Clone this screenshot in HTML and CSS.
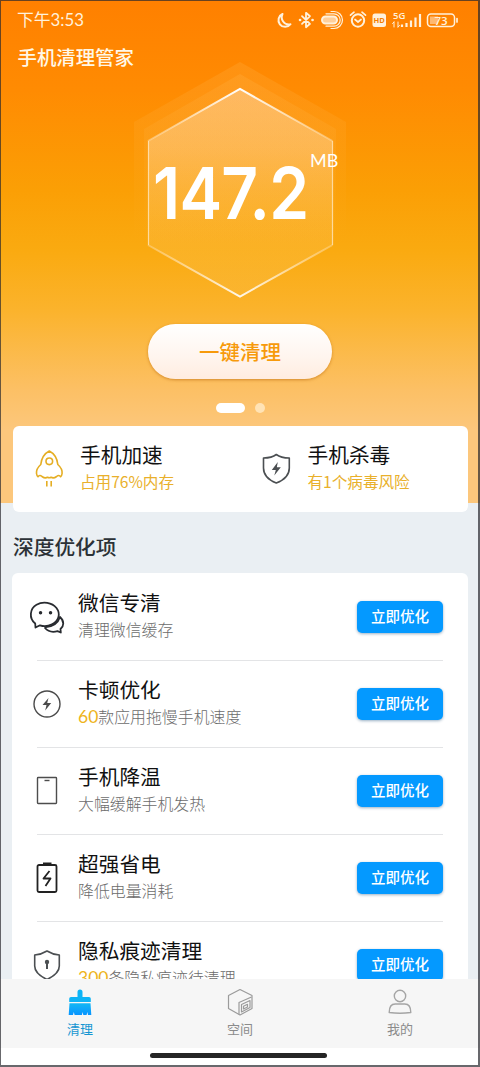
FILE: index.html
```html
<!DOCTYPE html>
<html lang="zh-CN">
<head>
<meta charset="utf-8">
<title>手机清理管家</title>
<link rel="stylesheet" href="styles.css">
</head>
<body>
<div class="phone">
  <main class="content">
    <section class="hero">
      <header class="status">
        <span class="time">下午3:53</span>
        <svg class="status-icons" width="184" height="22" viewBox="0 0 184 22" fill="none" stroke="#fff1dc" stroke-width="2" stroke-linecap="round" stroke-linejoin="round">
          <path d="M6.500 5a6.700 6.700 0 1 0 8 10.200C8 16.500 4 10 6.500 5z"/>
          <path d="M26 7.200l8 7.600-4 3.400V3.800l4 3.400-8 7.600" stroke-width="1.800"/>
          <path d="M24 11h.1M36.500 11h.1" stroke-width="2.600"/>
          <rect x="46" y="7.500" width="15" height="7" rx="3.500" fill="#ffcf9b"/>
          <path d="M50 4.800h8a6.200 6.200 0 0 1 0 12.400h-8M55 2.500h3a8.500 8.500 0 0 1 0 17h-3" stroke-width="1.200"/>
          <circle cx="82" cy="11.500" r="6.200"/><path d="M79 10.500l3 2.500 3-2.500M74.500 6.200l3.500-3M89.500 6.200l-3.500-3" stroke-width="1.700"/>
          <rect x="96.500" y="4.500" width="13.500" height="13.500" rx="2.500" fill="#fff1dc" stroke="none"/>
          <text x="103.200" y="14.200" class="hd">HD</text>
          <text x="117" y="9.500" class="net">5G</text>
          <path d="M118 13v5M122 13v5M116.500 14.500l1.500-1.500M122 18l1.500-1.500" stroke-width="1"/>
          <path d="M126 15.500v2.500M130.500 14v4M135 11.500v6.500M139.500 8.500v9.500M144 5v13" stroke-width="2.200" stroke-linecap="butt"/>
          <rect x="151.500" y="5" width="27" height="12.500" rx="3.500" stroke-width="1.500"/>
          <path d="M154 7.500h8v7.500h-8z" fill="#ffb970" stroke="none"/>
          <path d="M181 9.500v3.500" stroke-width="1.700"/>
          <text x="165" y="15.500" class="battery">73</text>
        </svg>
      </header>
      <h1 class="app-title">手机清理管家</h1>
      <div class="gauge">
        <svg class="hexagon" width="240" height="250" viewBox="0 0 240 250">
          <defs>
            <linearGradient id="halo" x1="0" y1="0" x2="0" y2="1">
              <stop offset="0" stop-color="#ffb850" stop-opacity=".22"/><stop offset=".75" stop-color="#ffb850" stop-opacity="0"/>
            </linearGradient>
            <linearGradient id="face" x1="0" y1="0" x2="0" y2="1">
              <stop offset="0" stop-color="#fff" stop-opacity=".3"/><stop offset=".28" stop-color="#ffe8c8" stop-opacity=".34"/><stop offset=".65" stop-color="#ffe0a0" stop-opacity=".18"/><stop offset="1" stop-color="#ffe0a0" stop-opacity=".08"/>
            </linearGradient>
            <linearGradient id="edge" x1="0" y1="0" x2="0" y2="1">
              <stop offset="0" stop-color="#fff"/><stop offset="1" stop-color="#ffe2b5" stop-opacity=".45"/>
            </linearGradient>
            <linearGradient id="edge-low" x1="0" y1="0" x2="0" y2="1">
              <stop offset="0" stop-color="#ffe2b5" stop-opacity=".4"/><stop offset="1" stop-color="#fff" stop-opacity=".9"/>
            </linearGradient>
          </defs>
          <path d="M120 12L226 72V202L120 250 14 202V72z" fill="url(#halo)"/>
          <path d="M120 24L216 79V197L120 250 24 197V79z" fill="url(#halo)"/>
          <path d="M120 39L212.500 91V195L120 246.500 28 195V91z" fill="url(#face)"/>
          <path d="M28.500 91V195M212.500 91V195" stroke="#ffe6bd" stroke-opacity=".8" stroke-width="1.200" fill="none"/>
          <path d="M28 91L120 39 212.500 91" stroke="url(#edge)" stroke-width="2" fill="none"/>
          <path d="M28 195L120 246.500 212.500 195" stroke="url(#edge-low)" stroke-width="2" fill="none"/>
        </svg>
        <div class="reading"><span class="amount">147.2</span><span class="unit">MB</span></div>
      </div>
      <div class="clean-btn">一键清理</div>
      <div class="pager"><i class="dot active"></i><i class="dot"></i></div>
    </section>

    <section class="shortcuts">
      <div class="shortcut">
        <svg class="shortcut-icon" width="40" height="42" viewBox="0 0 40 42" fill="none" stroke="#e5ae24" stroke-width="1.600" stroke-linejoin="round" stroke-linecap="round">
          <path d="M21.300 4C16.500 6.500 13.500 10.500 12.800 17.500 10 20 8 22.500 8.500 26.500c.2 1.500.7 2.800 1.500 3.200 1-1.500 2.500-1.500 4-.2 2 1.500 4.200 1.600 5.500.8q1.800 1 3.600 0c1.300.8 3.500.7 5.500-.8 1.500-1.300 3-1.300 4 .2.800-.4 1.300-1.700 1.500-3.200.5-4-1.500-6.500-4.300-9C29.100 10.500 26.100 6.500 21.300 4z"/>
          <circle cx="21.300" cy="14.300" r="3.300"/><path d="M18.800 34v5.500M23.200 34v5.500" stroke-linecap="butt"/>
        </svg>
        <div class="labels"><div class="title">手机加速</div><div class="sub accent">占用76%内存</div></div>
      </div>
      <div class="shortcut">
        <svg class="shortcut-icon" width="40" height="42" viewBox="0 0 40 42" fill="none" stroke="#4b4f52" stroke-width="1.600" stroke-linejoin="round">
          <path d="M20.300 7.500c4 3 8 3.500 13 3.500v10c0 7-5 12-13 15C12.500 33 7.500 28 7.500 21V11c5 0 9-.5 12.800-3.500z"/>
          <path d="M21.800 15l-6 8h4l-1.500 5.500 6.500-8.300h-4z" fill="#4b4f52" stroke="none"/>
        </svg>
        <div class="labels"><div class="title">手机杀毒</div><div class="sub accent">有1个病毒风险</div></div>
      </div>
    </section>

    <h2 class="section-title">深度优化项</h2>

    <section class="list">
      <div class="row">
        <svg class="row-icon" width="40" height="40" viewBox="0 0 40 40" fill="none" stroke="#282b30" stroke-width="1.800" stroke-linejoin="round" stroke-linecap="round">
          <path d="M8.200 26.500C1.500 21 3 11.500 9.500 7.800 16 4 25 5.500 29.500 11c4.500 6 2 13-4.500 16.300-4 2-8.500 2.200-12 1L8.500 30.500z"/>
          <path d="M33 20c4.500 4 4 9 .5 12l.3 3.500-3.300-1.300C25.500 35.500 20.500 34 18 31M33 20C31 26 26.500 29.500 19 30"/>
          <path d="M13.500 15.800h.1M23.500 15.800h.1" stroke-width="3.400"/>
        </svg>
        <div class="labels"><div class="title">微信专清</div><div class="sub">清理微信缓存</div></div>
        <span class="action">立即优化</span>
      </div>
      <div class="row">
        <svg class="row-icon" width="40" height="40" viewBox="0 0 40 40">
          <circle cx="20" cy="20" r="13" fill="none" stroke="#4b4b4b" stroke-width="1.400"/>
          <path d="M21.500 14l-6 7h4l-1.300 5.500 6-7.500h-4z" fill="#4b4b4b"/>
        </svg>
        <div class="labels"><div class="title">卡顿优化</div><div class="sub"><span class="count">60</span>款应用拖慢手机速度</div></div>
        <span class="action">立即优化</span>
      </div>
      <div class="row">
        <svg class="row-icon" width="40" height="40" viewBox="0 0 40 40" fill="none" stroke="#4d4d4d" stroke-width="1.400">
          <rect x="10.500" y="6.500" width="19" height="26" rx=".7"/><path d="M17.500 9.500h5"/>
        </svg>
        <div class="labels"><div class="title">手机降温</div><div class="sub">大幅缓解手机发热</div></div>
        <span class="action">立即优化</span>
      </div>
      <div class="row">
        <svg class="row-icon" width="40" height="40" viewBox="0 0 40 40" fill="none" stroke="#222" stroke-width="1.800">
          <rect x="10.500" y="7" width="19" height="27" rx="1.500"/><path d="M16 5.700h8.500" stroke-width="2.400"/>
          <path d="M22.500 13l-6 7.500h7l-5 7.500" stroke-linejoin="round"/>
        </svg>
        <div class="labels"><div class="title">超强省电</div><div class="sub">降低电量消耗</div></div>
        <span class="action">立即优化</span>
      </div>
      <div class="row">
        <svg class="row-icon" width="40" height="40" viewBox="0 0 40 40" fill="none" stroke="#4b4f52" stroke-width="1.600" stroke-linejoin="round">
          <path d="M20 6c4 2.500 7 3.500 12.300 4v11c0 6-5 10-12.300 13.500C12.700 31 7.700 27 7.700 21V10C13 9.500 16 8.500 20 6z"/>
          <circle cx="20" cy="17" r="2.200" fill="#4b4f52" stroke="none"/><path d="M20 16v8" stroke-width="2"/>
        </svg>
        <div class="labels"><div class="title">隐私痕迹清理</div><div class="sub"><span class="count">300</span>条隐私痕迹待清理</div></div>
        <span class="action">立即优化</span>
      </div>
    </section>
  </main>

  <nav class="tabs">
    <div class="tab active">
      <svg width="32" height="32" viewBox="0 0 32 32">
        <defs><linearGradient id="brush" x1="0" y1="0" x2="0" y2="1"><stop offset="0" stop-color="#12b8f5"/><stop offset="1" stop-color="#0894ff"/></linearGradient></defs>
        <path d="M13.500 6a2.500 2.500 0 0 1 5 0v5H25q1.800 0 1.800 1.800V16H5.200v-3.200Q5.200 11 7 11h6.500z" fill="#0eb4f6"/>
        <path d="M5.500 17.300h21L27.300 29h-3.300l-.7-3-.7 3h-3.300l-.7-3-.7 3h-7.300l-.8-3-.8 3H4.700z" fill="url(#brush)"/>
      </svg>
      <span>清理</span>
    </div>
    <div class="tab">
      <svg width="32" height="32" viewBox="0 0 32 32" fill="none" stroke="#9b9b9b" stroke-width="1.200" stroke-linejoin="round">
        <path d="M16 3.500L28 9.500v13L16 29 4.500 22.500V9.500z"/><path d="M27.500 11L15 16.500V28.500M26 14.500l-8.500 4v7.500l8.500-4.500zM23.500 18.300l-4 2v2.700l4-2z"/>
      </svg>
      <span>空间</span>
    </div>
    <div class="tab">
      <svg width="32" height="32" viewBox="0 0 32 32" fill="none" stroke="#a5a5a5" stroke-width="1.400" stroke-linejoin="round">
        <circle cx="16" cy="10" r="5.700"/><path d="M5.200 26.500c0-5 2-8.500 6-8.500h9.600c4 0 6 3.500 6 8.500q-10.800 1.500-21.600 0z"/>
      </svg>
      <span>我的</span>
    </div>
  </nav>
  <footer class="home"><div class="home-bar"></div></footer>
</div>
</body>
</html>
```
FILE: styles.css
```css
* { box-sizing: border-box; }

body {
  margin: 0;
  font-family: "Noto Sans CJK SC", sans-serif;
  color: #111;
}

.phone {
  position: relative;
  display: flex;
  flex-direction: column;
  width: 480px;
  height: 1067px;
  overflow: hidden;
  background: #eaeff3;
}

/* thin device outline over everything */
.phone::after {
  content: "";
  position: absolute;
  inset: 0;
  border: solid rgba(40, 40, 45, .7);
  border-width: 1px 2px 2px 1px;
  pointer-events: none;
}

.content {
  height: 979px;
  overflow: hidden;
  background: linear-gradient(#ff8000 0, #ff8b02 90px, #fb9f05 190px, #faaa10 250px, #fbb32c 310px, #fcc065 390px, #fcc77c 430px, #fcc77c 503px, #eaeff3 503px);
}

.hero {
  display: flex;
  flex-direction: column;
  align-items: center;
  height: 426px;
}

.status {
  display: flex;
  justify-content: space-between;
  align-self: stretch;
  height: 40px;
  padding: 9px 20px 0 17px;
}

.time {
  font: 400 16.800px/22px Lato, "Noto Sans CJK SC", sans-serif;
  color: #fff1dc;
}

.hd, .net, .battery { stroke: none; font-family: "Open Sans", sans-serif; }
.hd { fill: #f47e00; font-size: 7.500px; font-weight: 700; text-anchor: middle; }
.net { fill: #fff1dc; font-size: 9.500px; font-weight: 600; }
.battery { fill: #fff1dc; font-size: 11.500px; font-weight: 600; text-anchor: middle; }

.app-title {
  align-self: flex-start;
  margin: 0 0 0 17.500px;
  height: 34px;
  font-size: 19.400px;
  font-weight: 500;
  line-height: 34px;
  color: #fff8e8;
}

.gauge {
  display: grid;
  width: 240px;
  height: 250px;
  margin-top: -24px;
}

.hexagon, .reading { grid-area: 1 / 1; }

.reading {
  display: flex;
  align-items: flex-start;
  padding: 92px 0 0 33px;
  color: #fff;
}

.amount {
  width: 157px;
  font: 600 72px/102px Inter, sans-serif;
  letter-spacing: -.8px;
  white-space: nowrap;
  transform: scaleX(.89);
  transform-origin: 0 0;
}

.unit { font: 400 18px/26px Lato, sans-serif; padding-top: 5px; }

.clean-btn {
  width: 184px;
  height: 55px;
  margin-top: 24px;
  border-radius: 28px;
  background: linear-gradient(#fff, #fff5ee 60%, #ffece0);
  box-shadow: 0 1px 3px rgba(190, 110, 20, .65);
  font-size: 20.500px;
  font-weight: 500;
  line-height: 54px;
  text-align: center;
  color: #f79a0b;
}

.pager {
  display: flex;
  gap: 10px;
  margin: 24px 0 0;
}

.dot { width: 10px; height: 10px; border-radius: 5px; background: #ffe3b5; }
.dot.active { width: 29px; background: #fff; }

.shortcuts {
  display: grid;
  grid-template-columns: 1fr 1fr;
  height: 86px;
  margin: 0 12px 0 13px;
  border-radius: 6px;
  background: #fff;
}

.shortcut { display: flex; padding: 15px 0 0 15px; }
.shortcut-icon { margin: 6px 12px 0 0; }
.shortcuts .title { line-height: 27px; }

.title { font-size: 20.700px; line-height: 28px; white-space: nowrap; }
.sub { font-size: 15.900px; font-weight: 300; line-height: 27px; white-space: nowrap; color: #6c6c6c; }
.sub.accent { font-size: 15.600px; font-weight: 400; line-height: 26px; color: #e9b02b; }
.count { font: 400 17.500px/20px Lato, sans-serif; color: #eeb41c; }

.section-title {
  margin: 0 0 0 13px;
  height: 61px;
  padding-top: 19px;
  font-size: 20.700px;
  font-weight: 500;
  line-height: 30px;
  color: #2c3237;
}

.list {
  height: 460px;
  margin: 0 12px;
  padding-top: .5px;
  border-radius: 6px;
  background: #fff;
}

.row {
  display: flex;
  height: 87.200px;
  margin: 0 25px;
  padding-top: 14px;
  border-bottom: 1.500px solid #e3e4e6;
}

.row-icon { flex: none; margin: 9px 11px 0 -10px; }
.row .labels { flex: 1; }

.action {
  width: 86px;
  height: 32px;
  margin-top: 13px;
  border-radius: 5px;
  background: #0499ff;
  box-shadow: 0 1px 3px rgba(0, 60, 110, .4);
  font-size: 14.500px;
  font-weight: 500;
  line-height: 30px;
  text-align: center;
  color: #fff;
}

.tabs {
  display: grid;
  grid-template-columns: repeat(3, 1fr);
  height: 69px;
  background: #f6f6f6;
}

.tab {
  display: flex;
  flex-direction: column;
  align-items: center;
  padding-top: 7px;
  font-size: 13px;
  line-height: 21px;
  color: #8b8b8b;
}

.tab.active { color: #1696d2; }

.home {
  display: flex;
  justify-content: center;
  height: 19px;
  padding: 5px 3px 0 0;
  background: #fff;
}

.home-bar { width: 177px; height: 5px; border-radius: 3px; background: #252525; }
```
